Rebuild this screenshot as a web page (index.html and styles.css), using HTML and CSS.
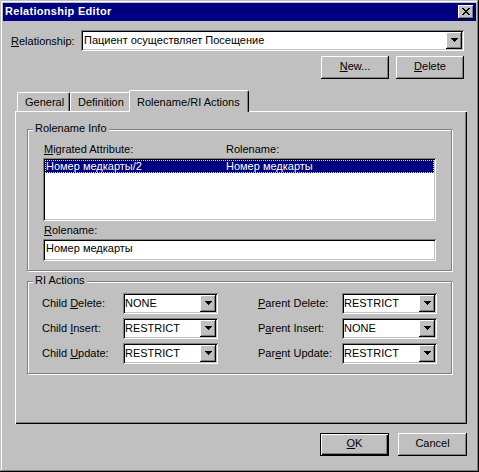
FILE: index.html
```html
<!DOCTYPE html>
<html>
<head>
<meta charset="utf-8">
<title>Relationship Editor</title>
<link rel="stylesheet" href="styles.css">
</head>
<body>
<div class="window">
  <div class="caption">
    <span class="caption-title">Relationship Editor</span>
    <span class="cap-btn"><svg class="close-glyph" width="8" height="7" viewBox="0 0 8 7"><path d="M0 0h2v1H0zM6 0h2v1H6zM1 1h2v1H1zM5 1h2v1H5zM2 2h4v1H2zM3 3h2v1H3zM2 4h4v1H2zM1 5h2v1H1zM5 5h2v1H5zM0 6h2v1H0zM6 6h2v1H6z" fill="#000"/></svg></span>
  </div>

  <div class="rel-row">
    <span class="rel-label"><u>R</u>elationship:</span>
    <div class="combo combo-wide">
      <span class="combo-text">Пациент осуществляет Посещение</span>
      <span class="drop-btn"><svg width="7" height="4" viewBox="0 0 7 4"><path d="M0 0h7v1H0zM1 1h5v1H1zM2 2h3v1H2zM3 3h1v1H3z" fill="#000"/></svg></span>
    </div>
  </div>

  <div class="top-buttons">
    <button class="btn"><u>N</u>ew...</button>
    <button class="btn"><u>D</u>elete</button>
  </div>

  <div class="tabstrip">
    <div class="tab tab-general">General</div>
    <div class="tab tab-definition">Definition</div>
    <div class="tab tab-active">Rolename/RI Actions</div>
  </div>

  <div class="panel">
    <div class="group group-rolename">
      <span class="legend">Rolename Info</span>
      <div class="list-header">
        <span class="hcol1"><u>M</u>igrated Attribute:</span>
        <span>Rolename:</span>
      </div>
      <div class="listbox">
        <div class="list-row selected">
          <span class="rcol1">Номер медкарты/2</span>
          <span>Номер медкарты</span>
        </div>
      </div>
      <div class="field-label"><u>R</u>olename:</div>
      <div class="textbox">Номер медкарты</div>
    </div>

    <div class="group group-ri">
      <span class="legend">RI Actions</span>
      <div class="ri-grid">
        <span class="ri-label">Child <u>D</u>elete:</span>
        <div class="combo combo-small"><span class="combo-text">NONE</span><span class="drop-btn"><svg width="7" height="4" viewBox="0 0 7 4"><path d="M0 0h7v1H0zM1 1h5v1H1zM2 2h3v1H2zM3 3h1v1H3z" fill="#000"/></svg></span></div>
        <span class="ri-label"><u>P</u>arent Delete:</span>
        <div class="combo combo-small"><span class="combo-text">RESTRICT</span><span class="drop-btn"><svg width="7" height="4" viewBox="0 0 7 4"><path d="M0 0h7v1H0zM1 1h5v1H1zM2 2h3v1H2zM3 3h1v1H3z" fill="#000"/></svg></span></div>

        <span class="ri-label">Child <u>I</u>nsert:</span>
        <div class="combo combo-small"><span class="combo-text">RESTRICT</span><span class="drop-btn"><svg width="7" height="4" viewBox="0 0 7 4"><path d="M0 0h7v1H0zM1 1h5v1H1zM2 2h3v1H2zM3 3h1v1H3z" fill="#000"/></svg></span></div>
        <span class="ri-label">P<u>a</u>rent Insert:</span>
        <div class="combo combo-small"><span class="combo-text">NONE</span><span class="drop-btn"><svg width="7" height="4" viewBox="0 0 7 4"><path d="M0 0h7v1H0zM1 1h5v1H1zM2 2h3v1H2zM3 3h1v1H3z" fill="#000"/></svg></span></div>

        <span class="ri-label">Child <u>U</u>pdate:</span>
        <div class="combo combo-small"><span class="combo-text">RESTRICT</span><span class="drop-btn"><svg width="7" height="4" viewBox="0 0 7 4"><path d="M0 0h7v1H0zM1 1h5v1H1zM2 2h3v1H2zM3 3h1v1H3z" fill="#000"/></svg></span></div>
        <span class="ri-label">Par<u>e</u>nt Update:</span>
        <div class="combo combo-small"><span class="combo-text">RESTRICT</span><span class="drop-btn"><svg width="7" height="4" viewBox="0 0 7 4"><path d="M0 0h7v1H0zM1 1h5v1H1zM2 2h3v1H2zM3 3h1v1H3z" fill="#000"/></svg></span></div>
      </div>
    </div>
  </div>

  <div class="footer">
    <button class="btn btn-default"><u>O</u>K</button>
    <button class="btn btn-cancel">Cancel</button>
  </div>
</div>
</body>
</html>
```

FILE: styles.css
```css
* {
  box-sizing: border-box;
}

html,
body {
  margin: 0;
  padding: 0;
  background: #c0c0c0;
}

body {
  font-family: "Liberation Sans", Arial, sans-serif;
  font-size: 11px;
  color: #000;
}

u {
  text-decoration: underline;
  text-underline-offset: 1px;
}

.window {
  width: 479px;
  height: 472px;
  padding: 3px;
  background: #c0c0c0;
  box-shadow: inset -1px -1px #000, inset 1px 1px #c0c0c0, inset -2px -2px #808080, inset 2px 2px #fff;
}

/* title bar */
.caption {
  height: 18px;
  background: #000080;
  color: #fff;
  display: flex;
  align-items: flex-start;
  justify-content: space-between;
  padding: 0 2px 0 2px;
}

.caption-title {
  font-weight: bold;
  line-height: 17px;
  letter-spacing: 0.3px;
}

.cap-btn {
  display: block;
  width: 16px;
  height: 14px;
  margin-top: 2px;
  padding: 3px 0 0 4px;
  background: #c0c0c0;
  box-shadow: inset -1px -1px #000, inset 1px 1px #fff, inset -2px -2px #808080;
}

.close-glyph {
  display: block;
}

/* relationship row */
.rel-row {
  display: flex;
  align-items: center;
  height: 21px;
  margin: 9px 12px 0 8px;
}

.rel-label {
  width: 70px;
  line-height: 13px;
  padding-top: 2px;
}

.combo {
  height: 21px;
  background: #fff;
  box-shadow: inset 1px 1px #808080, inset -1px -1px #fff, inset 2px 2px #000, inset -2px -2px #c0c0c0;
  display: flex;
  align-items: center;
  padding: 2px;
}

.combo-wide {
  flex: 1;
}

.combo-small {
  width: 95px;
}

.combo-text {
  flex: 1;
  line-height: 13px;
  white-space: nowrap;
  overflow: hidden;
}

.combo-wide .combo-text {
  padding-left: 1px;
}

.drop-btn {
  width: 16px;
  height: 17px;
  background: #c0c0c0;
  box-shadow: inset -1px -1px #000, inset 1px 1px #fff, inset -2px -2px #808080;
  display: flex;
  align-items: center;
  justify-content: center;
  padding-bottom: 1px;
}

.drop-btn svg {
  display: block;
}

/* buttons */
.btn {
  font-family: "Liberation Sans", Arial, sans-serif;
  font-size: 11px;
  color: #000;
  border: none;
  margin: 0;
  padding: 0 0 2px 0;
  width: 68px;
  height: 23px;
  background: #c0c0c0;
  box-shadow: inset -1px -1px #000, inset 1px 1px #fff, inset -2px -2px #808080;
  line-height: 13px;
  text-align: center;
}

.top-buttons {
  display: flex;
  justify-content: flex-end;
  gap: 7px;
  margin: 5px 12px 0 0;
}

/* tabs */
.tabstrip {
  position: relative;
  z-index: 1;
  display: flex;
  align-items: flex-end;
  height: 21px;
  margin: 11px 0 0 14px;
}

.tab {
  height: 19px;
  padding: 3px 0 0 7px;
  line-height: 13px;
  background: #c0c0c0;
  border-top: 1px solid #fff;
  border-left: 1px solid #fff;
  border-right: 1px solid #000;
  border-radius: 2px 2px 0 0;
  box-shadow: inset -1px 0 #808080;
  white-space: nowrap;
}

.tab-general {
  width: 53px;
}

.tab-definition {
  width: 61px;
}

.tab-active {
  position: relative;
  width: 120px;
  height: 22px;
  margin-left: -2px;
  margin-bottom: -1px;
  padding-top: 5px;
}

/* panel */
.panel {
  width: 452px;
  height: 313px;
  margin-left: 12px;
  padding: 18px 0 0 12px;
  box-shadow: inset 1px 1px #fff, inset -1px -1px #000, inset -2px -2px #808080;
}

.group {
  position: relative;
  width: 425px;
  border: 1px solid #808080;
  box-shadow: inset 1px 1px #fff, 1px 1px #fff;
}

.legend {
  position: absolute;
  left: 5px;
  top: -8px;
  padding: 0 2px;
  line-height: 13px;
  background: #c0c0c0;
}

.group-rolename {
  height: 142px;
  padding: 13px 15px 0 15px;
}

.list-header {
  display: flex;
  line-height: 13px;
  padding-left: 1px;
}

.hcol1 {
  width: 182px;
}

.listbox {
  margin-top: 2px;
  height: 63px;
  padding: 2px;
  background: #fff;
  box-shadow: inset 1px 1px #808080, inset -1px -1px #fff, inset 2px 2px #000, inset -2px -2px #c0c0c0;
}

.list-row {
  display: flex;
  height: 13px;
  line-height: 13px;
  padding-left: 1px;
  white-space: nowrap;
}

.list-row.selected {
  background: #000080;
  color: #fff;
  outline: 1px dotted #ffff00;
  outline-offset: -1px;
}

.rcol1 {
  width: 180px;
}

.field-label {
  margin-top: 3px;
  line-height: 13px;
  padding-left: 1px;
}

.textbox {
  margin-top: 2px;
  height: 22px;
  padding: 3px 0 0 3px;
  line-height: 13px;
  background: #fff;
  box-shadow: inset 1px 1px #808080, inset -1px -1px #fff, inset 2px 2px #000, inset -2px -2px #c0c0c0;
}

.group-ri {
  margin-top: 10px;
  height: 93px;
  padding: 11px 0 0 14px;
}

.ri-grid {
  display: grid;
  grid-template-columns: 81px 135px 84px 95px;
  grid-auto-rows: 21px;
  row-gap: 4px;
  align-items: center;
}

.ri-label {
  line-height: 13px;
  white-space: nowrap;
}

/* footer */
.footer {
  display: flex;
  justify-content: flex-end;
  gap: 9px;
  margin: 9px 9px 0 0;
}

.btn-default,
.btn-cancel {
  width: 69px;
}

.btn-default {
  box-shadow: inset 0 0 0 1px #000, inset 2px 2px #fff, inset -2px -2px #000, inset -3px -3px #808080;
}
```
